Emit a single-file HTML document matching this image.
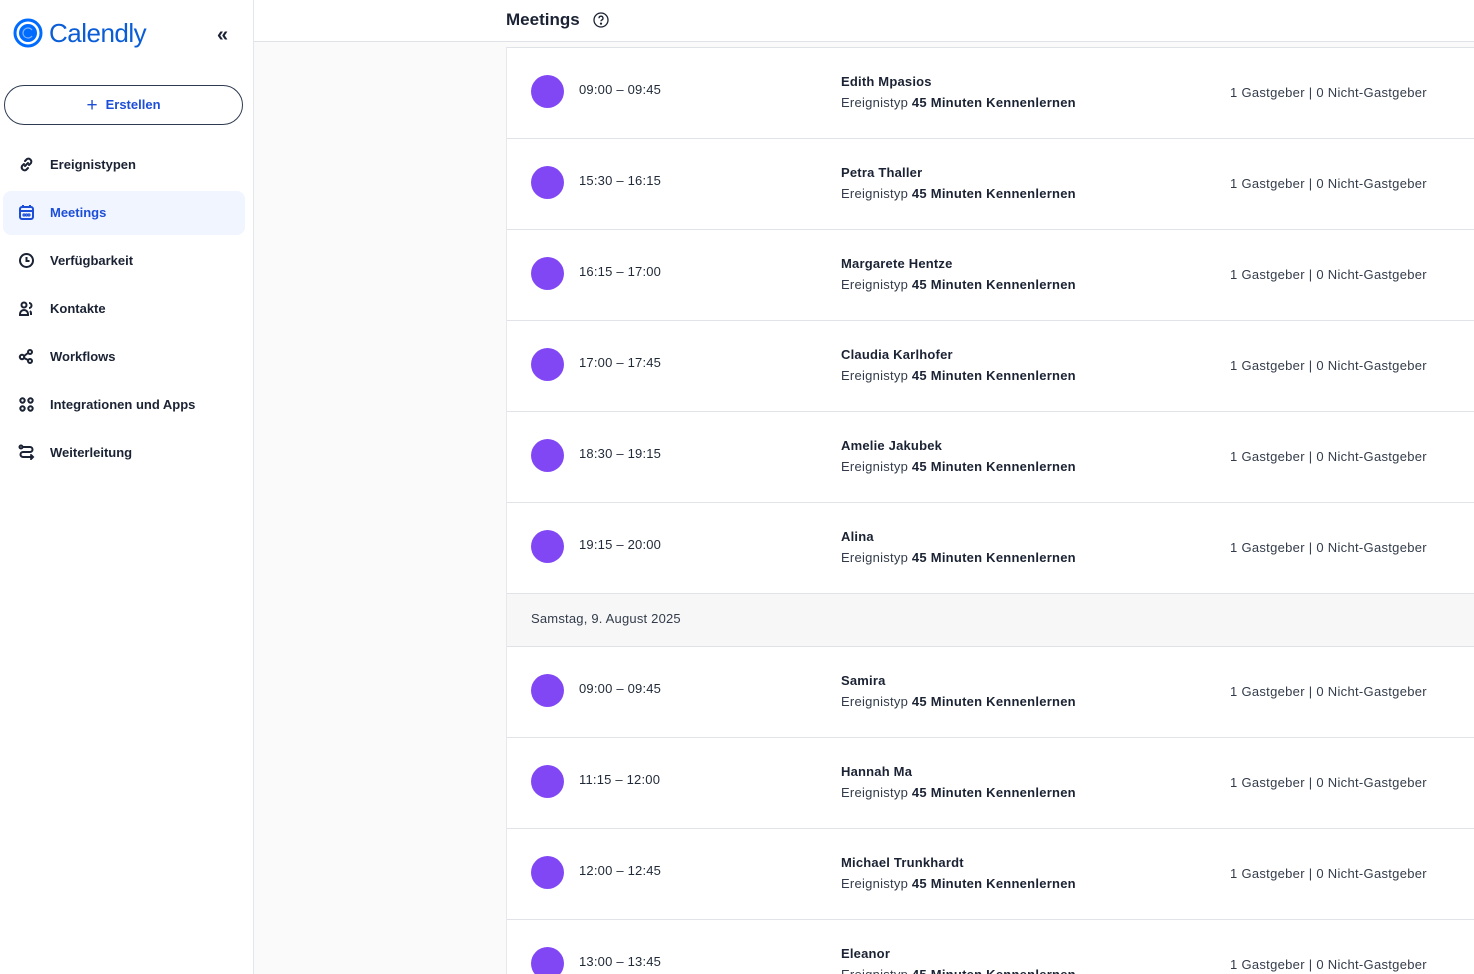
<!DOCTYPE html>
<html><head><meta charset="utf-8"><style>
*{margin:0;padding:0;box-sizing:border-box}
html,body{width:1474px;height:974px;overflow:hidden}
body{font-family:"Liberation Sans",sans-serif;background:#fafafa;position:relative;color:#1a2233}
.side{position:absolute;left:0;top:0;width:254px;height:974px;background:#fff;border-right:1px solid #e3e6ea}
.hdr{position:absolute;left:254px;top:0;right:0;height:42px;background:#fff;border-bottom:1px solid #dfe3e8}
.panel{position:absolute;left:506px;top:47px;right:0;height:927px;overflow:hidden;background:#fff;border-left:1px solid #e6e8eb;border-top:1px solid #dfe3e8}
.row{position:absolute;left:0;right:0;height:91px;border-bottom:1px solid #e0e4e8}
.dot{position:absolute;left:24px;top:27px;width:33px;height:33px;border-radius:50%;background:#8247f5}
.t{position:absolute;left:72px;top:34px;font-size:13px;color:#1f2937;letter-spacing:0.2px}
.n{position:absolute;left:334px;top:26px;font-size:13px;font-weight:bold;color:#1a2233;letter-spacing:0.2px}
.s{position:absolute;left:334px;top:47px;font-size:13px;color:#333c4a;letter-spacing:0.25px}
.s b{color:#1a2233}
.r{position:absolute;left:723px;top:37px;font-size:13px;color:#333c4a;letter-spacing:0.3px}
.date{position:absolute;left:0;right:0;height:53px;background:#f7f7f7;border-bottom:1px solid #dfe3e8;font-size:13px;padding:17px 0 0 24px;color:#333c4a;letter-spacing:0.2px}
.nav{position:absolute;left:50px;font-size:13px;font-weight:bold;color:#1a2233}
.ic{position:absolute;left:18px;width:17px;height:17px}
</style></head><body>
<div class="side">
  <svg style="position:absolute;left:13px;top:18px" width="30" height="30" viewBox="0 0 30 30"><circle cx="15" cy="15" r="13" fill="none" stroke="#006bff" stroke-width="3"/><circle cx="15" cy="15" r="9" fill="#006bff"/><path d="M19 12a5 5 0 1 0 0 6" fill="none" stroke="#7fb2ff" stroke-width="1.2"/></svg>
  <div style="position:absolute;left:49px;top:18px;font-size:26px;color:#0a5dd6;letter-spacing:-0.5px">Calendly</div>
  <div style="position:absolute;left:217px;top:24px;font-size:20px;color:#1a2233;font-weight:bold">«</div>
  <div style="position:absolute;left:4px;top:85px;width:239px;height:40px;border:1px solid #2d3a4f;border-radius:20px;text-align:center;font-size:13px;font-weight:bold;color:#1d4ed8;line-height:38px"><span style="font-size:19px;font-weight:normal;vertical-align:-2px;margin-right:8px">+</span>Erstellen</div>
  <svg class="ic" style="top:156px" viewBox="0 0 17 17" fill="none" stroke="#1a2233" stroke-width="2" stroke-linecap="round"><path d="M7 5l2-2a3 3 0 0 1 4 4l-2 2M10 12l-2 2a3 3 0 0 1-4-4l2-2M7 10l3-3"/></svg>
  <div class="nav" style="top:157px">Ereignistypen</div>
  <div style="position:absolute;left:3px;top:191px;width:242px;height:44px;background:#f0f5ff;border-radius:8px"></div>
  <svg class="ic" style="top:204px" viewBox="0 0 17 17" fill="none" stroke="#1d4ed8" stroke-width="2"><rect x="2" y="3" width="13" height="12" rx="2"/><path d="M2 7h13M5 1v3M12 1v3"/><circle cx="6" cy="11" r=".6"/><circle cx="8.5" cy="11" r=".6"/><circle cx="11" cy="11" r=".6"/></svg>
  <div class="nav" style="top:205px;color:#1d4ed8">Meetings</div>
  <svg class="ic" style="top:252px" viewBox="0 0 17 17" fill="none" stroke="#1a2233" stroke-width="2"><circle cx="8.5" cy="8.5" r="6.5"/><path d="M8.5 5v4h3"/></svg>
  <div class="nav" style="top:253px">Verfügbarkeit</div>
  <svg class="ic" style="top:300px" viewBox="0 0 17 17" fill="none" stroke="#1a2233" stroke-width="2"><circle cx="6" cy="5" r="2.5"/><path d="M2 15v-1a4 4 0 0 1 8 0v1zM11 3a2.5 2.5 0 0 1 0 5M13 15v-2a3 3 0 0 0-1-2"/></svg>
  <div class="nav" style="top:301px">Kontakte</div>
  <svg class="ic" style="top:348px" viewBox="0 0 17 17" fill="none" stroke="#1a2233" stroke-width="2"><circle cx="4" cy="9" r="2.2"/><circle cx="12" cy="4" r="2"/><circle cx="12" cy="13" r="2"/><path d="M6 8l4-3M6 10l4 2"/></svg>
  <div class="nav" style="top:349px">Workflows</div>
  <svg class="ic" style="top:396px" viewBox="0 0 17 17" fill="none" stroke="#1a2233" stroke-width="2"><circle cx="4.5" cy="4.5" r="2.2"/><circle cx="12.5" cy="4.5" r="2.2"/><circle cx="4.5" cy="12.5" r="2.2"/><circle cx="12.5" cy="12.5" r="2.2"/></svg>
  <div class="nav" style="top:397px">Integrationen und Apps</div>
  <svg class="ic" style="top:444px" viewBox="0 0 17 17" fill="none" stroke="#1a2233" stroke-width="2" stroke-linecap="round"><circle cx="3" cy="3" r="1.5"/><path d="M5 3h7a2.5 2.5 0 0 1 0 5H5a2.5 2.5 0 0 0 0 5h10M13 11l2 2-2 2"/></svg>
  <div class="nav" style="top:445px">Weiterleitung</div>
</div>
<div class="hdr"><div style="position:absolute;left:252px;top:10px;font-size:17px;font-weight:bold;color:#1a2233">Meetings</div>
<svg style="position:absolute;left:339px;top:12px" width="16" height="16" viewBox="0 0 16 16" fill="none" stroke="#1a2233" stroke-width="1.3"><circle cx="8" cy="8" r="7"/><path d="M6 6.2a2 2 0 1 1 2.6 1.9c-.5.2-.6.6-.6 1.2"/><circle cx="8" cy="11.6" r=".5" fill="#1a2233"/></svg></div>
<div class="panel">
<div class="row" style="top:0"><div class="dot"></div><div class="t">09:00 – 09:45</div><div class="n">Edith Mpasios</div><div class="s">Ereignistyp <b>45 Minuten Kennenlernen</b></div><div class="r">1 Gastgeber | 0 Nicht-Gastgeber</div></div>
<div class="row" style="top:91px"><div class="dot"></div><div class="t">15:30 – 16:15</div><div class="n">Petra Thaller</div><div class="s">Ereignistyp <b>45 Minuten Kennenlernen</b></div><div class="r">1 Gastgeber | 0 Nicht-Gastgeber</div></div>
<div class="row" style="top:182px"><div class="dot"></div><div class="t">16:15 – 17:00</div><div class="n">Margarete Hentze</div><div class="s">Ereignistyp <b>45 Minuten Kennenlernen</b></div><div class="r">1 Gastgeber | 0 Nicht-Gastgeber</div></div>
<div class="row" style="top:273px"><div class="dot"></div><div class="t">17:00 – 17:45</div><div class="n">Claudia Karlhofer</div><div class="s">Ereignistyp <b>45 Minuten Kennenlernen</b></div><div class="r">1 Gastgeber | 0 Nicht-Gastgeber</div></div>
<div class="row" style="top:364px"><div class="dot"></div><div class="t">18:30 – 19:15</div><div class="n">Amelie Jakubek</div><div class="s">Ereignistyp <b>45 Minuten Kennenlernen</b></div><div class="r">1 Gastgeber | 0 Nicht-Gastgeber</div></div>
<div class="row" style="top:455px"><div class="dot"></div><div class="t">19:15 – 20:00</div><div class="n">Alina</div><div class="s">Ereignistyp <b>45 Minuten Kennenlernen</b></div><div class="r">1 Gastgeber | 0 Nicht-Gastgeber</div></div>
<div class="date" style="top:546px">Samstag, 9. August 2025</div>
<div class="row" style="top:599px"><div class="dot"></div><div class="t">09:00 – 09:45</div><div class="n">Samira</div><div class="s">Ereignistyp <b>45 Minuten Kennenlernen</b></div><div class="r">1 Gastgeber | 0 Nicht-Gastgeber</div></div>
<div class="row" style="top:690px"><div class="dot"></div><div class="t">11:15 – 12:00</div><div class="n">Hannah Ma</div><div class="s">Ereignistyp <b>45 Minuten Kennenlernen</b></div><div class="r">1 Gastgeber | 0 Nicht-Gastgeber</div></div>
<div class="row" style="top:781px"><div class="dot"></div><div class="t">12:00 – 12:45</div><div class="n">Michael Trunkhardt</div><div class="s">Ereignistyp <b>45 Minuten Kennenlernen</b></div><div class="r">1 Gastgeber | 0 Nicht-Gastgeber</div></div>
<div class="row" style="top:872px"><div class="dot"></div><div class="t">13:00 – 13:45</div><div class="n">Eleanor</div><div class="s">Ereignistyp <b>45 Minuten Kennenlernen</b></div><div class="r">1 Gastgeber | 0 Nicht-Gastgeber</div></div>
</div>
</body></html>
